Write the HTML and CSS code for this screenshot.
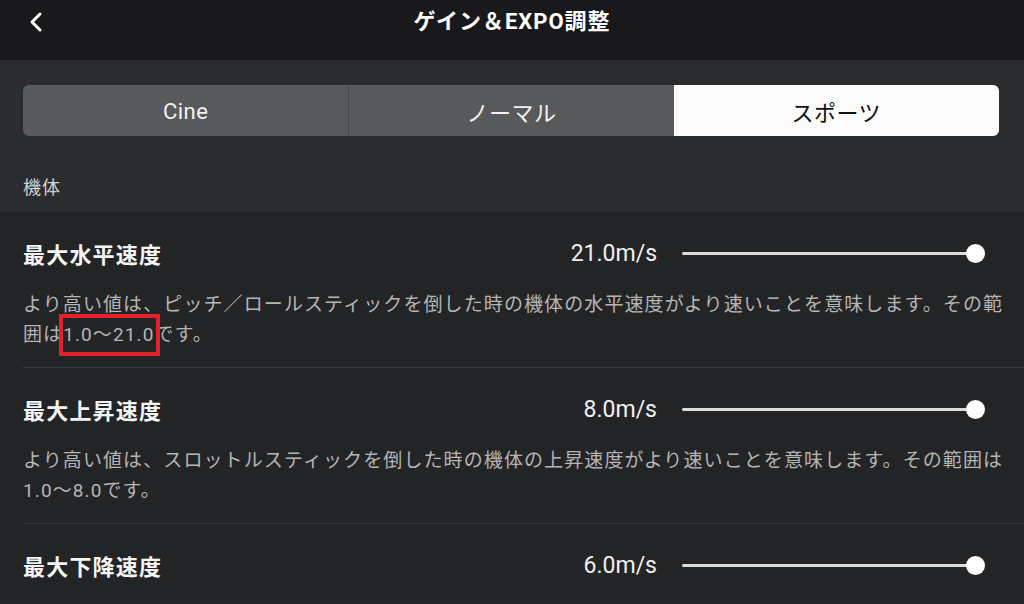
FILE: index.html
```html
<!DOCTYPE html>
<html lang="ja">
<head>
<meta charset="utf-8">
<title>ゲイン＆EXPO調整</title>
<link rel="stylesheet" href="styles.css">
</head>
<body>
<div class="screen">
  <header class="topbar">
    <button class="back" aria-label="戻る">
      <svg width="14" height="22" viewBox="0 0 14 22"><polyline points="11,3 3,11 11,19" fill="none" stroke="#fff" stroke-width="3" stroke-linecap="round" stroke-linejoin="round"/></svg>
    </button>
    <h1 class="title">ゲイン＆EXPO調整</h1>
    <span class="spacer"></span>
  </header>

  <section class="modes">
    <div class="segmented">
      <div class="seg">Cine</div>
      <div class="seg">ノーマル</div>
      <div class="seg active">スポーツ</div>
    </div>
    <div class="group-label">機体</div>
  </section>

  <section class="list">
    <div class="item">
      <div class="row">
        <div class="name">最大水平速度</div>
        <div class="value">21.0m/s</div>
        <div class="slider"><div class="track"></div><div class="thumb"></div></div>
      </div>
      <p class="desc">より高い値は、ピッチ／ロールスティックを倒した時の機体の水平速度がより速いことを意味します。その範囲は<span class="hl">1.0〜21.0</span>です。</p>
    </div>
    <div class="item">
      <div class="row">
        <div class="name">最大上昇速度</div>
        <div class="value">8.0m/s</div>
        <div class="slider"><div class="track"></div><div class="thumb"></div></div>
      </div>
      <p class="desc">より高い値は、スロットルスティックを倒した時の機体の上昇速度がより速いことを意味します。その範囲は1.0〜8.0です。</p>
    </div>
    <div class="item">
      <div class="row">
        <div class="name">最大下降速度</div>
        <div class="value">6.0m/s</div>
        <div class="slider"><div class="track"></div><div class="thumb"></div></div>
      </div>
    </div>
  </section>
</div>
</body>
</html>
```

FILE: styles.css
```css
* { box-sizing: border-box; }
html, body { margin: 0; padding: 0; }
body {
  width: 1024px;
  height: 604px;
  overflow: hidden;
  background: #232426;
  font-family: Roboto, "Noto Sans CJK JP", sans-serif;
  color: #f0f0f0;
}
.screen { display: flex; flex-direction: column; height: 604px; }

.topbar {
  height: 60px;
  background: #19191b;
  display: grid;
  grid-template-columns: 120px 1fr 120px;
  align-items: center;
  padding-bottom: 16px;
}
.back {
  background: none;
  border: 0;
  padding: 0 0 0 29px;
  display: flex;
  align-items: center;
  justify-content: flex-start;
  height: 44px;
  cursor: pointer;
}
.title {
  margin: 0;
  text-align: center;
  font-size: 22px;
  font-weight: 700;
  letter-spacing: 1px;
  color: #ffffff;
  line-height: 44px;
}

.modes {
  background: #2b2c2e;
  padding: 25px 25px 0 23px;
}
.segmented {
  display: grid;
  grid-template-columns: 1fr 1fr 1fr;
  height: 51px;
  border-radius: 6px;
  overflow: hidden;
  background: #58595b;
}
.seg {
  display: flex;
  align-items: center;
  justify-content: center;
  font-size: 22px;
  letter-spacing: 0.5px;
  color: #f2f2f2;
  padding-top: 1px;
}
.seg + .seg { border-left: 1px solid #47484a; }
.seg.active {
  background: #fbfbfb;
  color: #111;
  border-left: 0;
}
.group-label {
  padding: 40px 0 12px;
  line-height: 24px;
  font-size: 18px;
  letter-spacing: 1px;
  color: #d2d2d2;
}

.list { flex: 1; background: #232426; }
.item {
  margin-left: 23px;
  padding: 25px 0 17px;
  border-bottom: 1px solid #3b3c3e;
}
.item:last-child { border-bottom: 0; }
.row {
  display: flex;
  align-items: center;
  height: 32px;
  padding-right: 39px;
}
.name {
  flex: 1;
  font-size: 22px;
  font-weight: 700;
  letter-spacing: 1.2px;
  color: #f4f4f4;
}
.value {
  font-size: 23px;
  color: #f0f0f0;
}
.slider {
  position: relative;
  width: 303px;
  height: 19px;
  margin-left: 25px;
  display: flex;
  align-items: center;
}
.track {
  flex: 1;
  height: 3px;
  background: #dcdcdc;
  border-radius: 2px;
  margin-right: 9px;
}
.thumb {
  position: absolute;
  right: 0;
  top: 0;
  width: 19px;
  height: 19px;
  border-radius: 50%;
  background: #ffffff;
}
.desc {
  margin: 21px 0 0;
  padding-right: 16px;
  font-size: 19px;
  line-height: 30px;
  letter-spacing: 1.1px;
  color: #b5b5b5;
}
.hl { position: relative; }
.hl::after {
  content: "";
  position: absolute;
  left: -4px;
  right: -6px;
  top: -9px;
  bottom: -10px;
  border: 4px solid #e1222b;
}
```
